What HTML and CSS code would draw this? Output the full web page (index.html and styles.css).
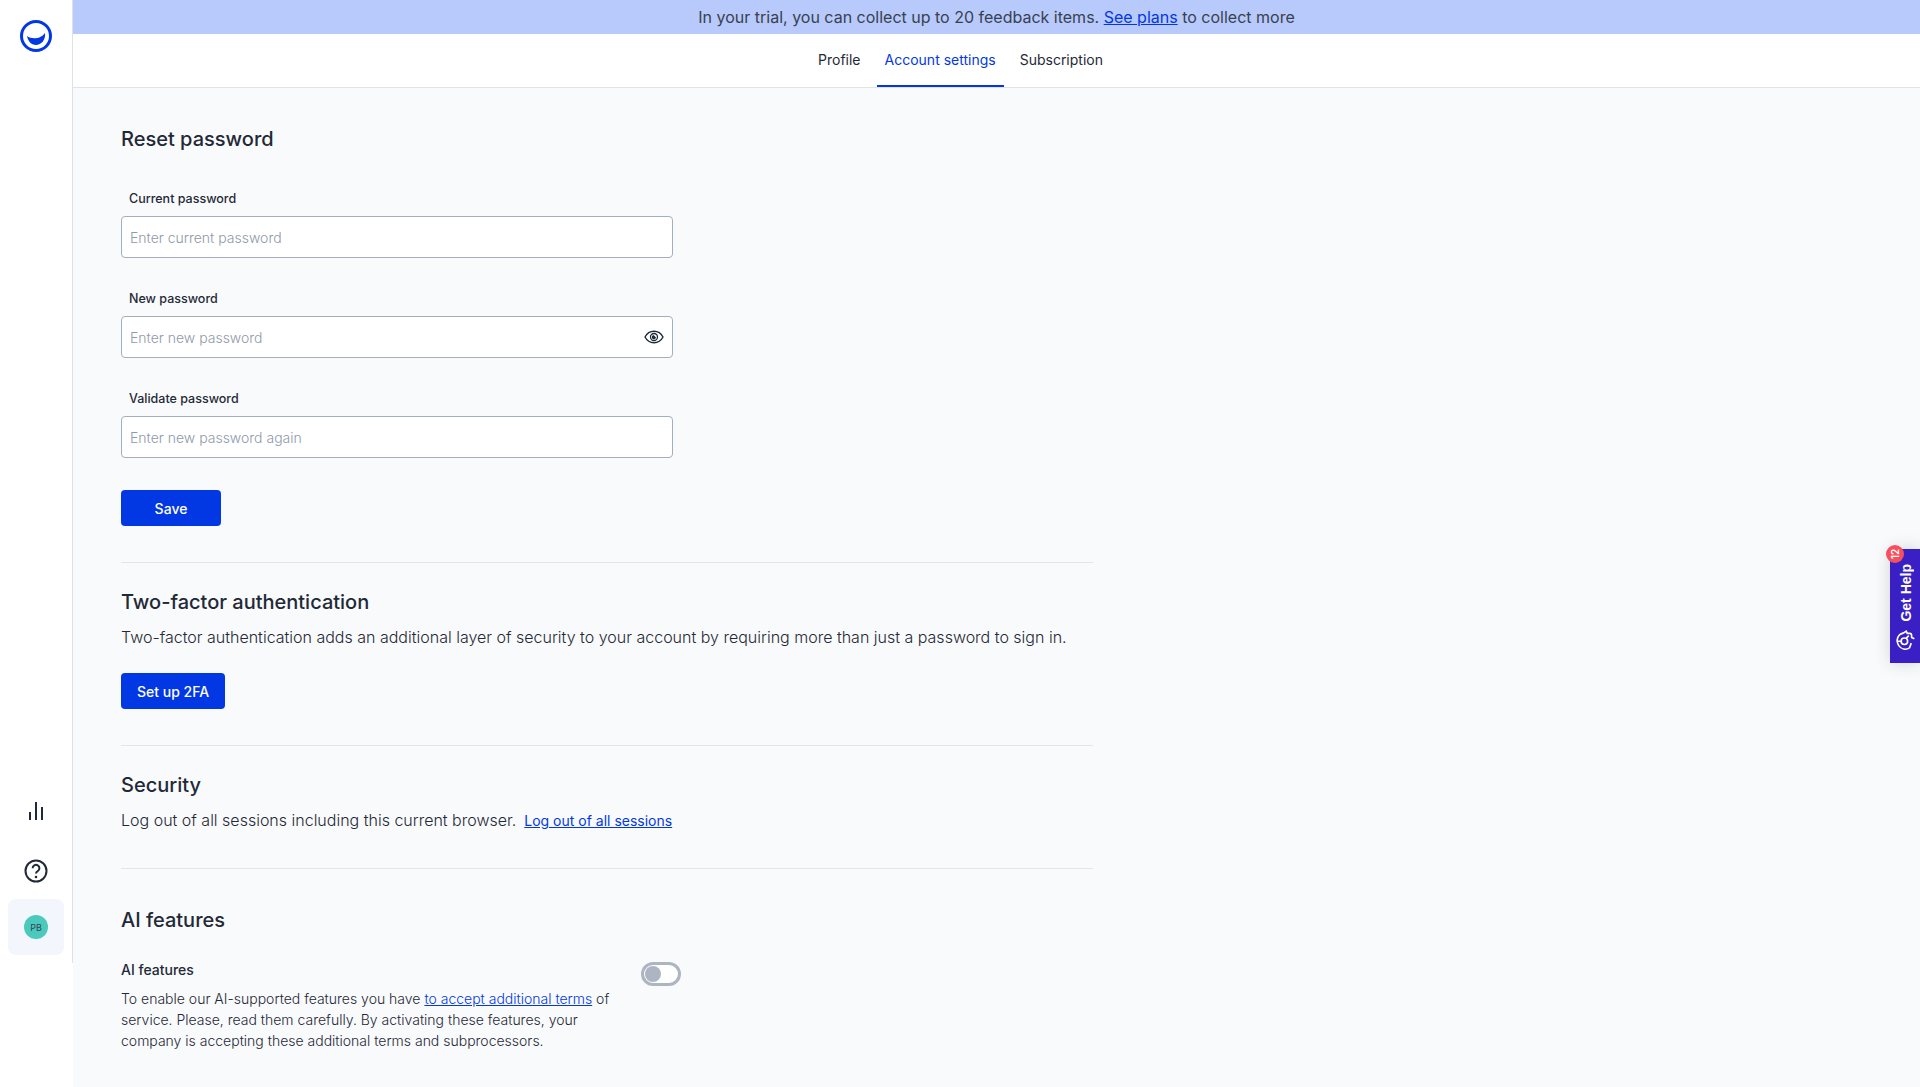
FILE: index.html
```html
<!DOCTYPE html>
<html lang="en">
<head>
<meta charset="utf-8">
<title>Account settings</title>
<link rel="stylesheet" href="styles.css">
</head>
<body>
<div class="app">
  <aside class="sidebar">
    <div class="rail">
      <svg class="logo" width="32" height="32" viewBox="0 0 32 32" aria-hidden="true">
        <circle cx="16" cy="16" r="14.500" fill="none" stroke="#0238e4" stroke-width="3"></circle>
        <path d="M7 16C11 19 20 20 25 13C26 20 21 25 16 25C11 25 8 21 7 16z" fill="#0238e4"></path>
      </svg>
      <div class="rail-bottom">
        <svg class="rail-icon chart" width="24" height="24" viewBox="0 0 24 24" aria-hidden="true">
          <path d="M6 20v-8M12 20V2M18 20V7" fill="none" stroke="#1f2937" stroke-width="2"></path>
        </svg>
        <svg class="rail-icon" width="24" height="24" viewBox="0 0 24 24" aria-hidden="true">
          <circle cx="12" cy="12" r="10.500" fill="none" stroke="#1f2937" stroke-width="2"></circle>
          <path d="M8.600 9.200a3.400 3.400 0 1 1 5.100 3c-1.100.6-1.700 1.200-1.700 2.400" fill="none" stroke="#1f2937" stroke-width="2"></path>
          <circle cx="12" cy="18" r="1.300" fill="#1f2937"></circle>
        </svg>
        <div class="avatar-tile"><span class="avatar">PB</span></div>
      </div>
    </div>
  </aside>
  <div class="main">
    <div class="banner">In your trial, you can collect up to 20 feedback items.&nbsp;<a href="#">See plans</a>&nbsp;to collect more</div>
    <nav class="tabs">
      <a class="tab" href="#">Profile</a>
      <a class="tab active" href="#">Account settings</a>
      <a class="tab" href="#">Subscription</a>
    </nav>
    <main class="content">
      <section class="section reset">
        <h2>Reset password</h2>
        <div class="field">
          <label>Current password</label>
          <div class="input"><span class="placeholder">Enter current password</span></div>
        </div>
        <div class="field">
          <label>New password</label>
          <div class="input"><span class="placeholder">Enter new password</span>
            <svg width="20" height="20" viewBox="0 0 20 20" aria-hidden="true">
              <path d="M1 10c2-3.800 5.200-5.700 9-5.700s7 1.900 9 5.700c-2 3.800-5.200 5.700-9 5.700S3 13.800 1 10z" fill="none" stroke="#1f2937" stroke-width="1.400"></path>
              <circle cx="10" cy="10" r="3.500" fill="none" stroke="#1f2937" stroke-width="1.300"></circle>
              <path d="M9.600 8a2.100 2.100 0 1 0 2.400 2.400z" fill="#1f2937"></path>
            </svg>
          </div>
        </div>
        <div class="field">
          <label>Validate password</label>
          <div class="input"><span class="placeholder">Enter new password again</span></div>
        </div>
        <button class="btn save">Save</button>
      </section>
      <section class="section twofa">
        <h2>Two-factor authentication</h2>
        <p class="text">Two-factor authentication adds an additional layer of security to your account by requiring more than just a password to sign in.</p>
        <button class="btn">Set up 2FA</button>
      </section>
      <section class="section security">
        <h2>Security</h2>
        <p class="text">Log out of all sessions including this current browser. <a class="small-link" href="#">Log out of all sessions</a></p>
      </section>
      <section class="ai">
        <h2>AI features</h2>
        <div class="ai-row">
          <div class="ai-copy">
            <h3>AI features</h3>
            <p>To enable our AI-supported features you have <a href="#">to accept additional terms</a> of service. Please, read them carefully. By activating these features, your company is accepting these additional terms and subprocessors.</p>
          </div>
          <span class="toggle"><span class="knob"></span></span>
        </div>
      </section>
    </main>
  </div>
</div>
<aside class="help">
  <span class="help-badge"><span>12</span></span>
  <span class="help-label">Get Help</span>
  <svg width="20" height="20" viewBox="2 2 16 16" aria-hidden="true" class="help-icon">
    <path d="M3.500 13.500c-1.500-3-.8-6.500 2-8.500 3-2 6.500-1.500 8.500.5 1 1 1.300 2 1.500 3l1.500 2.500-1.700.8v2c0 1-1 1.500-2 1.500h-1.300L11 17.500" fill="none" stroke="#fff" stroke-width="1.300"></path>
    <circle cx="9" cy="9.500" r="2.600" fill="none" stroke="#fff" stroke-width="1.300"></circle>
    <path d="M3.500 13.500l4 1.500M9 6.900V3.500M11.500 11l2 2" fill="none" stroke="#fff" stroke-width="1.300"></path>
  </svg>
</aside>
</body>
</html>
```
FILE: styles.css
```css
* { box-sizing: border-box; }
html, body { margin: 0; height: 1087px; overflow: hidden; }
body { font-family: Inter, "Noto Sans", sans-serif; color: #1f2937; background: #f9fafb; }
a { color: #0238e4; }

.app { display: flex; height: 1087px; }

.sidebar { width: 73px; flex: none; background: #fff; }
.rail { height: 963px; border-right: 1px solid #dde1ea; display: flex; flex-direction: column; align-items: center; padding-top: 20px; }
.rail-bottom { margin-top: auto; display: flex; flex-direction: column; align-items: center; width: 100%; padding-bottom: 8px; }
.rail-icon { margin-bottom: 16px; }
.rail-icon.chart { margin-bottom: 35px; }
.avatar-tile { width: 56px; height: 56px; border-radius: 8px; background: #f3f6fd; display: flex; align-items: center; justify-content: center; }
.avatar { width: 24px; height: 24px; border-radius: 50%; background: #4ac9bd; color: #374151; font-size: 9px; display: flex; align-items: center; justify-content: center; }

.main { flex: 1; min-width: 0; display: flex; flex-direction: column; }
.banner { height: 34px; background: #b8c9fb; display: flex; align-items: center; justify-content: center; font-size: 16px; color: #374151; }
.tabs { height: 54px; background: #fff; border-bottom: 1px solid #e0e3ea; display: flex; justify-content: center; padding-right: 72px; }
.tab { font-size: 14px; color: #1f2937; text-decoration: none; padding: 0 8px; height: 53px; line-height: 52px; }
.tab + .tab { margin-left: 8px; }
.tab.active { color: #0238e4; border-bottom: 2px solid #0238e4; }

.content { padding: 0 48px; width: 1068px; }
.section { border-bottom: 1px solid #e3e5ea; }
h2 { margin: 0; font-size: 20px; line-height: 28px; font-weight: 500; color: #1f2937; }
.reset { padding-top: 37px; height: 475px; }
.reset h2 { margin-bottom: 36px; }
.field label { display: block; font-size: 12.500px; font-weight: 500; line-height: 20px; padding-left: 8px; margin-bottom: 7px; color: #1f2937; }
.field + .field { margin-top: 31px; }
.input { width: 552px; height: 42px; background: #fff; border: 1px solid #a5aebd; border-radius: 4px; display: flex; align-items: center; justify-content: space-between; padding: 0 8px; }
.placeholder { font-size: 14px; font-weight: 300; color: #8f99aa; }
.btn { display: block; height: 36px; background: #0238e4; color: #fff; border: 0; border-radius: 4px; font: 500 14px Inter, sans-serif; padding: 0 16px; }
.save { width: 100px; margin-top: 32px; }
.twofa { padding-top: 25px; height: 183px; }
.text { margin: 9px 0 0; font-size: 16px; font-weight: 300; line-height: 24px; color: #1f2937; }
.twofa .btn { margin-top: 24px; }
.security { padding-top: 25px; height: 123px; }
.small-link { font-size: 14px; font-weight: 400; margin-left: 3.500px; }
.ai { padding-top: 37px; }
.ai-row { display: flex; align-items: flex-start; gap: 31px; margin-top: 25px; }
.ai-copy { width: 489px; }
.ai-copy h3 { margin: 0; font-size: 14px; line-height: 22px; font-weight: 500; }
.ai-copy p { margin: 7px 0 0; font-size: 14px; font-weight: 300; line-height: 21px; color: #1f2937; }
.toggle { margin-top: 3px; width: 40px; height: 24px; border: 3px solid #aeb5c2; border-radius: 12px; background: #fff; display: flex; align-items: center; padding-left: 1px; flex: none; }
.knob { width: 16px; height: 16px; border-radius: 50%; background: #aeb5c2; }

.help { position: absolute; left: 1890px; top: 549px; width: 30px; height: 114px; background: #3a1fc4; box-shadow: 0 0 16px rgba(40, 40, 80, .18); color: #fff; }
.help-badge { position: absolute; left: -4px; top: -4px; width: 18px; height: 18px; border-radius: 50%; background: #f4505f; display: flex; align-items: center; justify-content: center; font-size: 10px; font-weight: 600; }
.help-badge span { transform: rotate(-90deg); }
.help-label { position: absolute; left: 7px; top: 15px; writing-mode: vertical-rl; transform: rotate(180deg); font: 700 14px/18px "Liberation Sans", Arial, sans-serif; }
.help-icon { position: absolute; left: 5px; top: 81px; transform: rotate(-90deg); }
```
